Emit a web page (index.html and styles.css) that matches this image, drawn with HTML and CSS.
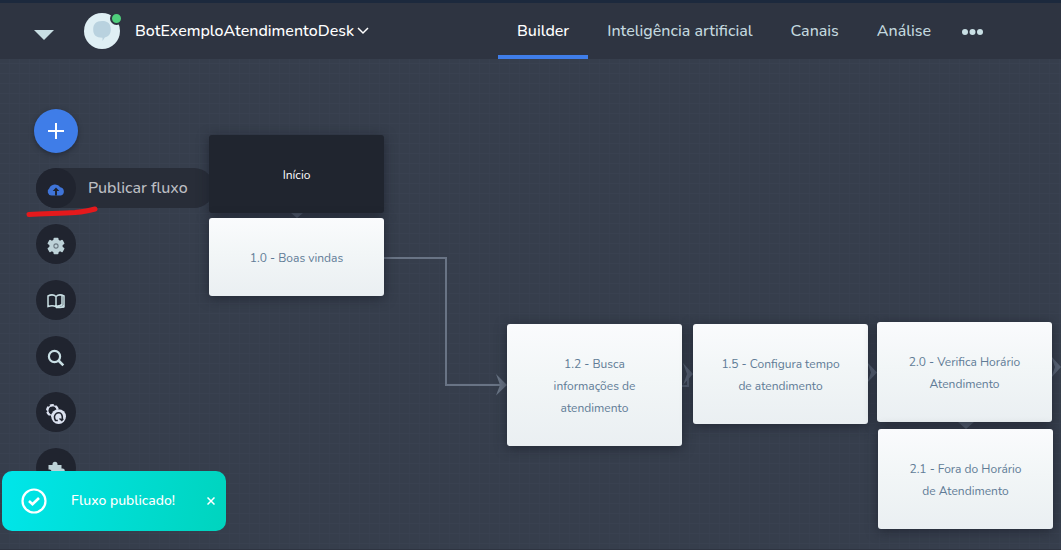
FILE: index.html
```html
<!DOCTYPE html>
<html lang="pt-BR">
<head>
<meta charset="utf-8">
<meta name="viewport" content="width=device-width, initial-scale=1">
<title>Builder - BotExemploAtendimentoDesk</title>
<link rel="stylesheet" href="styles.css">
</head>
<body>
<header class="header">
  <div class="brand">
    <button class="icon-button" aria-label="Abrir menu"><svg width="20" height="10" viewBox="0 0 20 10"><path d="M0 0h20L10 10z" fill="#c9dfe4"/></svg></button>
    <span class="avatar">
      <svg width="36" height="36" viewBox="0 0 36 36"><circle cx="18" cy="18" r="18" fill="#dfeff4"/><path d="M18 8c6 0 8.800 2.600 8.800 8.500 0 4.500-2.300 7.200-6 8L18.500 28v-3.300C12 24.700 9.200 22 9.200 16.500S12 8 18 8z" fill="#b9d2df"/></svg>
      <span class="status"></span>
    </span>
    <button class="bot-name">BotExemploAtendimentoDesk<svg width="12" height="8" viewBox="0 0 12 8"><path d="M1 1l5 5 5-5" fill="none" stroke="#fff" stroke-width="1.500"/></svg></button>
  </div>
  <nav class="nav">
    <a class="nav-link nav-active" href="#builder">Builder</a>
    <a class="nav-link" href="#ia">Inteligência artificial</a>
    <a class="nav-link" href="#canais">Canais</a>
    <a class="nav-link" href="#analise">Análise</a>
    <button class="icon-button more" aria-label="Mais opções"><svg width="21" height="6" viewBox="0 0 21 6" fill="#c9dfe4"><circle cx="3" cy="3" r="3"/><circle cx="10.500" cy="3" r="3"/><circle cx="18" cy="3" r="3"/></svg></button>
  </nav>
</header>
<main class="canvas">
  <div class="toolbar">
    <button class="add" aria-label="Adicionar bloco"><svg width="16" height="16" viewBox="0 0 16 16"><path d="M8 0v16M0 8h16" stroke="#fff" stroke-width="2"/></svg></button>
    <button class="tool tool-open">
      <span class="tool-icon"><svg width="18" height="14" viewBox="0 0 18 14"><path d="M4.500 12.500A4 4 0 0 1 2.300 5.300 6 5.500 0 0 1 13.300 4.300 4.200 4.200 0 0 1 13.800 12.500z" fill="#3f74d8"/><path d="M9 4.500L5.700 8H8v4.500h2V8h2.300z" fill="#20242f"/></svg></span>
      <span class="tool-label">Publicar fluxo</span>
    </button>
    <button class="tool" aria-label="Configurações"><span class="tool-icon"><svg width="18" height="18" viewBox="0 0 18 18"><g fill="#bdd2d8"><circle cx="9" cy="9" r="6.700"/><rect x="6.500" y=".8" width="5" height="16.400" rx="1"/><rect x="6.500" y=".3" width="5" height="17.400" rx="1" transform="rotate(60 9 9)"/><rect x="6.500" y=".3" width="5" height="17.400" rx="1" transform="rotate(120 9 9)"/></g><circle cx="9" cy="9" r="2.100" fill="none" stroke="#6b7983" stroke-width="1.100"/></svg></span></button>
    <button class="tool" aria-label="Documentação"><span class="tool-icon"><svg width="18" height="15" viewBox="0 0 18 15" fill="none" stroke="#c9dfe4" stroke-width="1.500"><path d="M9 12.500V2.500C7 .700 3.500.700 1 2v10.500c2.500-1 5.500-1 8 0zM9 12.500V2.500C11 .700 14.500.700 17 2v10.500c-2.500-1-5.500-1-8 0z"/><path d="M15 2v8.500L9 13.500h4l4-.500"/></svg></span></button>
    <button class="tool" aria-label="Buscar"><span class="tool-icon"><svg width="18" height="18" viewBox="0 0 18 18" fill="none" stroke="#c9dfe4"><circle cx="7.500" cy="7.500" r="5.600" stroke-width="2.200"/><path d="M11.500 11.500l4.800 4.800" stroke-width="2.600"/></svg></span></button>
    <button class="tool" aria-label="Restaurar configurações"><span class="tool-icon"><svg width="20" height="20" viewBox="0 0 20 20"><circle cx="6.500" cy="6.500" r="5.400" fill="none" stroke="#dce2f0" stroke-width="2.200" stroke-dasharray="3.900 1.650"/><circle cx="6.500" cy="6.500" r="4.800" fill="none" stroke="#dce2f0" stroke-width="1.300"/><circle cx="12.600" cy="12.600" r="7.400" fill="#dce2f0"/><path d="M9.500 16.500c-1.300-2.200-1.300-5 .5-6.700 1.700-1.600 4.400-1.300 5.600.5.900 1.400.9 4 .2 6.200M9 16.500h2.800M13.500 14.500l2.300 2 1.500-2" fill="none" stroke="#20242f" stroke-width="1.500"/></svg></span></button>
    <button class="tool" aria-label="Extensões"><span class="tool-icon"><svg width="18" height="18" viewBox="0 0 18 18"><path d="M1.500 4h4V3.200a2.500 2.500 0 0 1 5 0V4h4v3.500h1a2.300 2.300 0 0 1 0 4.600h-1V17H1.500v-4.500h1a2 2 0 0 0 0-4h-1z" fill="#bdd2d8"/></svg></span></button>
  </div>

  <div class="flow">
    <svg class="edges" aria-hidden="true">
      <g fill="none" stroke="#697485" stroke-width="2">
        <path d="M384 199h62v127h54"/>
        <path d="M682 327h6v-12" stroke="#566173"/>
      </g>
      <g fill="#5b6678">
        <path d="M496 315l11 11-11 10.500 4-10.500z" fill="#697485"/>
        <path d="M683 304l10 11-10 11 4-11z"/>
        <path d="M867 303l10 10.500-10 10.500 4-10.500z"/>
        <path d="M1051 297l10 11-10 11 4-11z"/>
        <path d="M291 154h12l-6 5z"/>
        <path d="M958 363h16l-8 7z"/>
      </g>
    </svg>
    <article class="node node-start">Início</article>
    <article class="node node-welcome">1.0 - Boas vindas</article>
    <article class="node node-info">1.2 - Busca<br>informações de<br>atendimento</article>
    <article class="node node-time">1.5 - Configura tempo<br>de atendimento</article>
    <article class="node node-check">2.0 - Verifica Horário<br>Atendimento</article>
    <article class="node node-closed">2.1 - Fora do Horário<br>de Atendimento</article>
  </div>
  <svg class="marker" width="74" height="14" viewBox="0 0 74 14" aria-hidden="true"><path d="M4 9.500C20 8.500 36 8.500 50 7.500c10-1 15-2 20-3.500" fill="none" stroke="#e5191c" stroke-width="5" stroke-linecap="round"/></svg>
  <div class="toast" role="status">
    <svg width="26" height="26" viewBox="0 0 26 26" fill="none" stroke="#fff"><circle cx="13" cy="13" r="11.500" stroke-width="2.200"/><path d="M8 13l3.500 3.200 6.500-6.200" stroke-width="2.600"/></svg>
    <span class="toast-text">Fluxo publicado!</span>
    <button class="icon-button" aria-label="Fechar"><svg width="8" height="8" viewBox="0 0 8 8"><path d="M.500.500l7 7M7.500.500l-7 7" stroke="#fff" stroke-width="1.500"/></svg></button>
  </div>
</main>
</body>
</html>
```
FILE: styles.css
```css
* { box-sizing: border-box; }
body {
  margin: 0;
  min-height: 100vh;
  display: flex;
  flex-direction: column;
  background: #363e4c;
  font-family: Nunito, "Open Sans", "Noto Sans", sans-serif;
  font-size: 16px;
  font-weight: 500;
  overflow: hidden;
}
button {
  border: 0;
  padding: 0;
  background: none;
  color: inherit;
  font: inherit;
  cursor: pointer;
}
svg { display: block; flex: none; }
.icon-button { display: flex; }

.header {
  display: flex;
  height: 59px;
  border-top: 3px solid #1c293d;
  background: #2e3441;
  color: #c3d8df;
}
.brand {
  flex: 0 0 463px;
  display: flex;
  align-items: center;
  padding-left: 34px;
}
.brand > .icon-button { margin-top: 8px; }
.avatar { position: relative; margin-left: 30px; }
.status {
  position: absolute;
  top: -1px;
  right: -3px;
  width: 13px;
  height: 13px;
  border: 2px solid #2e3441;
  border-radius: 50%;
  background: #4fcf7c;
}
.bot-name {
  display: flex;
  align-items: center;
  gap: 3px;
  margin-left: 15px;
  color: #fff;
}
.nav { display: flex; padding-left: 35px; }
.nav-link {
  display: flex;
  align-items: center;
  padding: 4px 19px 0;
  border-bottom: 4px solid transparent;
  color: inherit;
  line-height: 20px;
  text-decoration: none;
}
.nav-active { border-color: #3f7de8; color: #fff; }
.more { align-items: center; padding: 2px 0 0 12px; }

.canvas {
  position: relative;
  flex: 1;
  border-bottom: 1px solid #2e3441;
  background:
    repeating-linear-gradient(to bottom, transparent 0 4px, #394150 4px 5px, transparent 5px 10px),
    repeating-linear-gradient(to right, transparent 0 9px, #38404f 9px 10px),
    #363e4c;
}
.toolbar {
  display: flex;
  flex-direction: column;
  align-items: flex-start;
  gap: 16px;
  padding: 50px 0 0 36px;
}
.add {
  display: grid;
  place-items: center;
  width: 44px;
  height: 44px;
  margin: 0 0 -1px -2px;
  border-radius: 50%;
  background: #3f7de8;
  box-shadow: 0 2px 5px #1b202b99;
}
.tool {
  display: flex;
  align-items: center;
  border-radius: 20px;
}
.tool-open { background: #282d38; color: #bcbec2; }
.tool-icon {
  display: grid;
  place-items: center;
  width: 40px;
  height: 40px;
  padding-top: 3px;
  border-radius: 50%;
  background: #20242f;
}
.tool-label { padding: 0 26px 0 12px; }

.flow { position: absolute; inset: 0; overflow: hidden; pointer-events: none; }
.edges { position: absolute; width: 100%; height: 100%; }
.node {
  position: absolute;
  width: 175px;
  padding: 29px 16px 27px;
  border-radius: 3px;
  background: linear-gradient(#fafbfd, #f2f6f7 45%, #eaeff2);
  box-shadow: 0 2px 12px #1b202bb3;
  color: #607b96;
  font-size: 12px;
  font-weight: 400;
  line-height: 22px;
  text-align: center;
}
.node-start { left: 209px; top: 76px; background: #20252f; color: #fff; }
.node-welcome { left: 209px; top: 159px; }
.node-info { left: 507px; top: 265px; }
.node-time { left: 693px; top: 265px; }
.node-check { left: 877px; top: 263px; }
.node-closed { left: 878px; top: 370px; }

.marker { position: absolute; left: 25px; top: 146px; }
.toast {
  position: absolute;
  left: 2px;
  bottom: 18px;
  display: flex;
  align-items: center;
  width: 224px;
  height: 60px;
  padding: 0 11px 0 19px;
  border-radius: 10px;
  background: linear-gradient(100deg, #00e6ea, #00d4be);
  color: #fff;
  font-size: 14px;
}
.toast-text { flex: 1; padding: 0 0 2px 24px; }
```
